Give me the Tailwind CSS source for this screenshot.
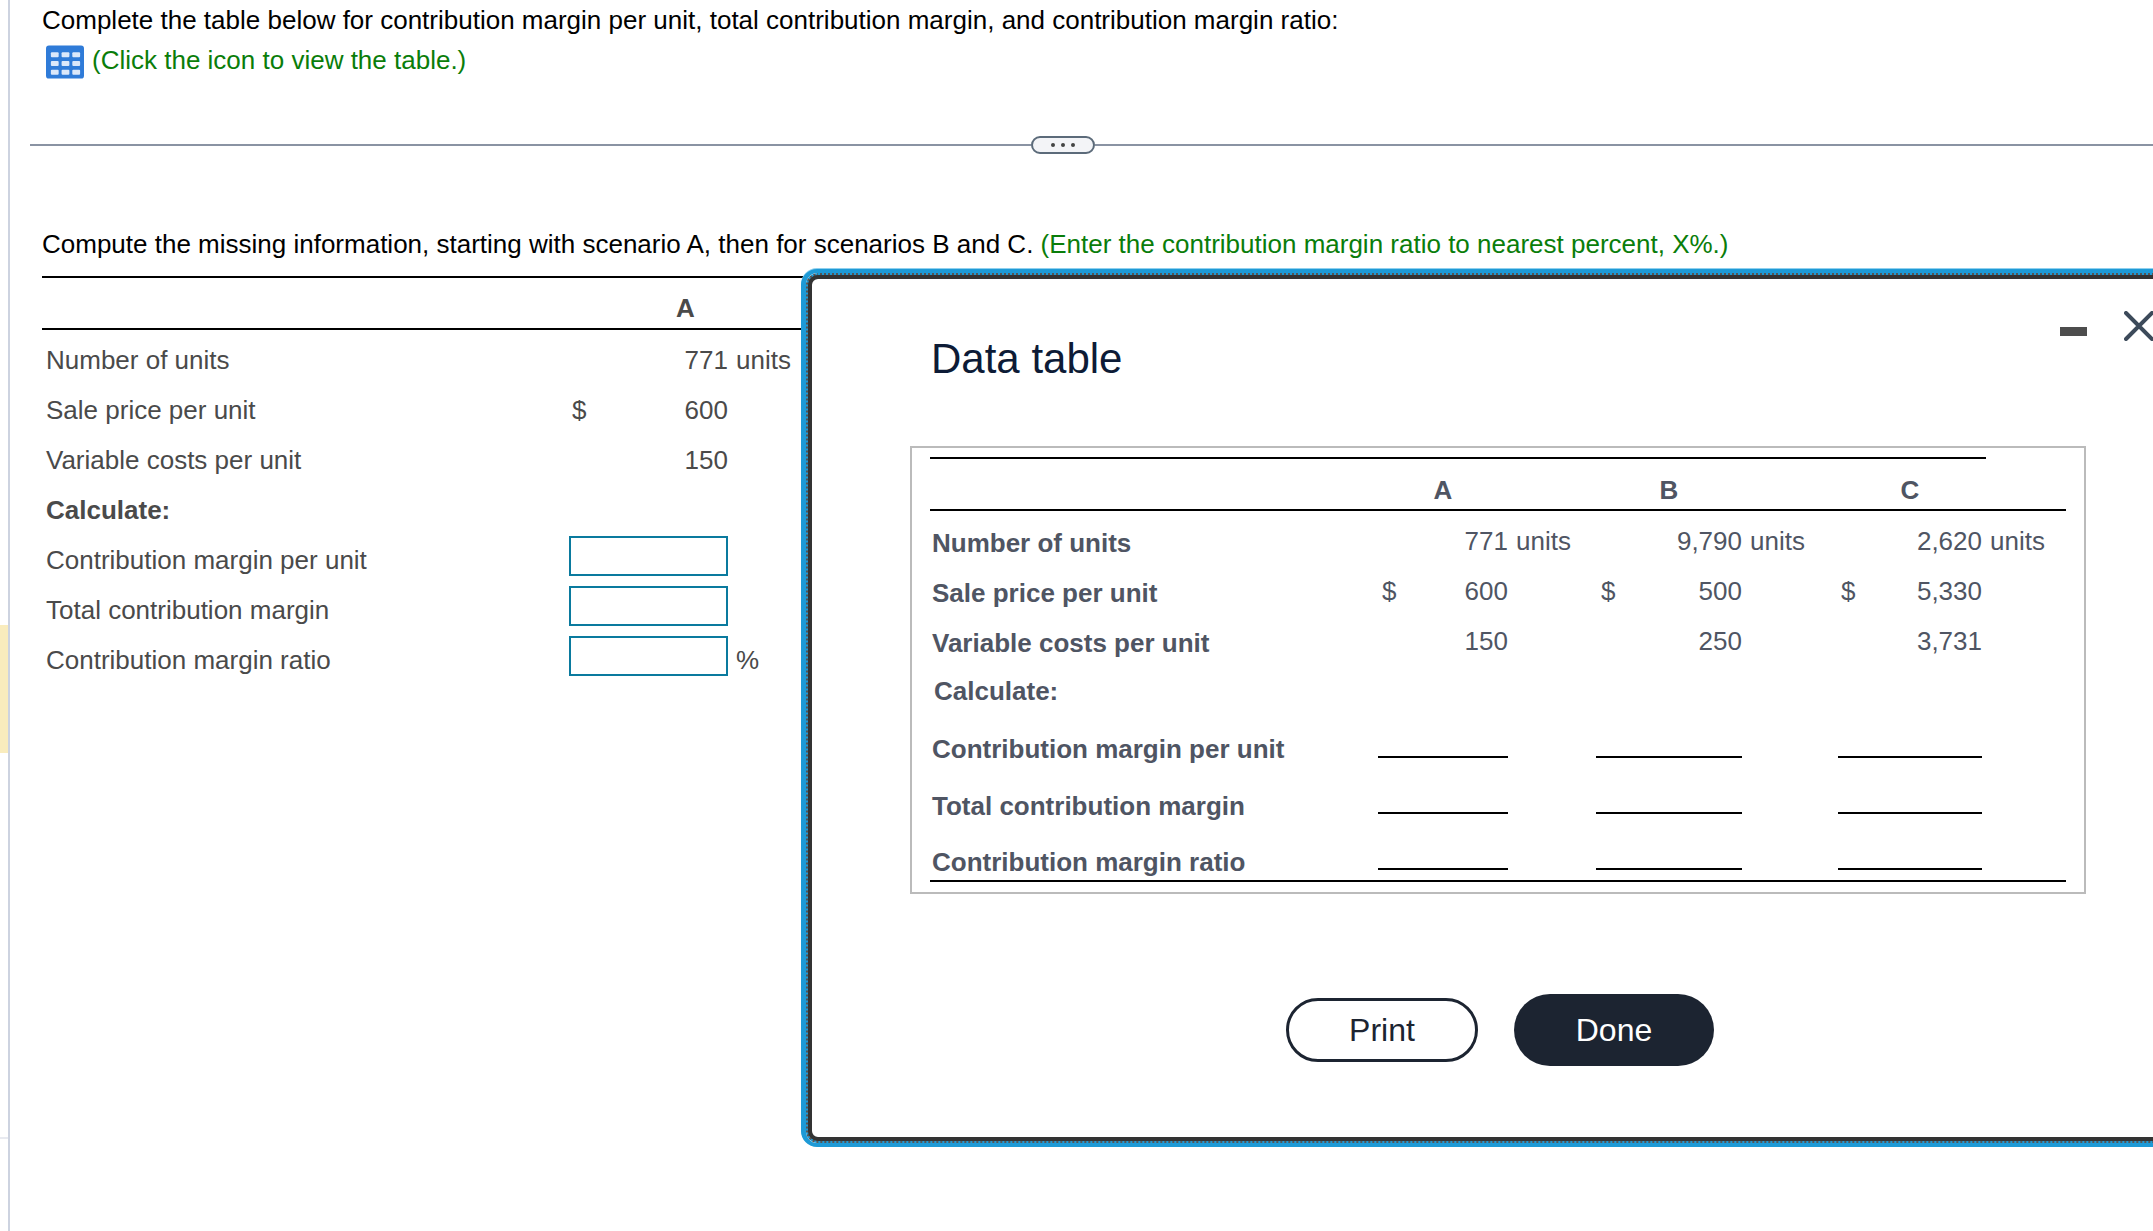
<!DOCTYPE html>
<html lang="en">
<head>
  <meta charset="UTF-8" />
  <title>Contribution margin</title>
  <script src="https://cdn.jsdelivr.net/npm/@tailwindcss/browser@4"></script>
</head>
<body class="bg-white h-[1231px] overflow-hidden relative font-['Liberation_Sans',sans-serif] text-[26px]">
  <!-- left rail -->
  <div class="absolute left-[8px] top-0 w-[2px] h-full bg-[#cdd3e0]"></div>
  <div class="absolute left-0 top-[625px] w-[8px] h-[128px] bg-[#f9ecbd]"></div>
  <div class="absolute left-0 top-[1137px] w-[8px] h-[2px] bg-[#e8eaf0]"></div>

  <div class="pl-[42px]">
    <p class="h-[40px] leading-[40px] text-black">Complete the table below for contribution margin per unit, total contribution margin, and contribution margin ratio:</p>
    <p class="h-[40px] flex items-center text-[#0a7d0a] ml-[4px]">
      <svg class="w-[38px] h-[34px] mr-[8px] mt-[4px]" viewBox="0 0 39 34">
        <rect width="39" height="34" rx="3" fill="#2f7bd8"/>
        <g fill="#dbe8fa">
          <rect x="5" y="7" width="8" height="5" rx="1"/><rect x="16" y="7" width="8" height="5" rx="1"/><rect x="27" y="7" width="8" height="5" rx="1"/>
          <rect x="5" y="16" width="8" height="5" rx="1"/><rect x="16" y="16" width="8" height="5" rx="1"/><rect x="27" y="16" width="8" height="5" rx="1"/>
          <rect x="5" y="25" width="8" height="5" rx="1"/><rect x="16" y="25" width="8" height="5" rx="1"/><rect x="27" y="25" width="8" height="5" rx="1"/>
        </g>
      </svg>
      (Click the icon to view the table.)
    </p>
  </div>

  <!-- divider -->
  <div class="ml-[30px] mt-[56px] h-[18px] flex items-center">
    <div class="flex-1 h-[2px] bg-[#8a93a3]"></div>
    <div class="w-[64px] h-[18px] rounded-full border-2 border-[#5c6b7a] bg-[#f3f4f7] flex items-center justify-center gap-[6px]">
      <span class="w-[4px] h-[4px] rounded-full bg-[#444]"></span>
      <span class="w-[4px] h-[4px] rounded-full bg-[#444]"></span>
      <span class="w-[4px] h-[4px] rounded-full bg-[#444]"></span>
    </div>
    <div class="w-[1058px] h-[2px] bg-[#8a93a3]"></div>
  </div>

  <div class="pl-[42px]">
    <p class="mt-[70px] h-[40px] leading-[40px] text-black">Compute the missing information, starting with scenario A, then for scenarios B and C. <span class="text-[#0a7d0a]">(Enter the contribution margin ratio to nearest percent, X%.)</span></p>

    <!-- question table, runs under the dialog -->
    <div class="mt-[14px] w-[770px] text-[#4a4a4a]">
      <div class="h-[40px] border-y-2 border-black flex items-center pt-[10px] box-content -mt-[2px]">
        <span class="ml-[634px] font-bold">A</span>
      </div>
      <div class="pl-[4px]">
        <div class="flex items-center h-[50px] mt-[5px]">
          <span class="w-[523px]">Number of units</span>
          <span class="w-[159px] flex justify-end">771</span>
          <span class="ml-[8px]">units</span>
        </div>
        <div class="flex items-center h-[50px]">
          <span class="w-[523px]">Sale price per unit</span>
          <span class="w-[159px] flex justify-between"><span class="ml-[3px]">$</span><span>600</span></span>
        </div>
        <div class="flex items-center h-[50px]">
          <span class="w-[523px]">Variable costs per unit</span>
          <span class="w-[159px] flex justify-end">150</span>
        </div>
        <div class="flex items-center h-[50px] font-bold">Calculate:</div>
        <div class="flex items-center h-[50px]">
          <span class="w-[523px]">Contribution margin per unit</span>
          <span class="w-[159px] h-[40px] border-2 border-[#0a7a9e] mb-[8px]"></span>
        </div>
        <div class="flex items-center h-[50px]">
          <span class="w-[523px]">Total contribution margin</span>
          <span class="w-[159px] h-[40px] border-2 border-[#0a7a9e] mb-[8px]"></span>
        </div>
        <div class="flex items-center h-[50px]">
          <span class="w-[523px]">Contribution margin ratio</span>
          <span class="w-[159px] h-[40px] border-2 border-[#0a7a9e] mb-[8px]"></span>
          <span class="ml-[8px]">%</span>
        </div>
      </div>
    </div>
  </div>

  <!-- dialog -->
  <div class="absolute left-[801px] top-[269px] w-[1400px] h-[878px] rounded-[16px] border-[4px] border-l-[5px] border-[#1e9ad6] shadow-[0_-1px_0_#8fd0ee] bg-white">
    <div class="h-full rounded-[12px] border-2 border-dotted border-[#1e9ad6] bg-[#555]">
      <div class="h-full rounded-[10px] border-[4px] border-[#333] bg-white relative">
        <h2 class="absolute left-[119px] top-[55px] text-[42px] leading-[50px] text-[#0d1b36]">Data table</h2>
        <div class="absolute left-[1248px] top-[48px] w-[27px] h-[9px] bg-[#4d4d4d]"></div>
        <svg class="absolute left-[1312px] top-[32px] w-[30px] h-[30px]" viewBox="0 0 30 30" fill="none" stroke="#3c4a5a" stroke-width="4" stroke-linecap="round">
          <path d="M2 2 L28 28 M28 2 L2 28"/>
        </svg>

        <div class="absolute left-[98px] top-[167px] w-[1176px] h-[448px] border-2 border-[#bbb] pl-[18px] pt-[9px] text-[#4f5563]">
          <div class="w-[1056px] h-[2px] bg-black"></div>
          <div class="w-[1136px] h-[52px] border-b-2 border-black flex items-end leading-[37px] font-bold">
            <span class="w-[448px]"></span>
            <span class="w-[130px] text-center">A</span>
            <span class="w-[88px]"></span>
            <span class="w-[146px] text-center">B</span>
            <span class="w-[96px]"></span>
            <span class="w-[144px] text-center">C</span>
          </div>
          <div class="w-[1136px] mt-[5px]">
            <div class="flex h-[50px] items-center">
              <span class="w-[448px] pl-[2px] pt-[4px] font-bold">Number of units</span>
              <span class="w-[130px] text-right">771</span><span class="ml-[8px] w-[80px]">units</span>
              <span class="w-[146px] text-right">9,790</span><span class="ml-[8px] w-[88px]">units</span>
              <span class="w-[144px] text-right">2,620</span><span class="ml-[8px]">units</span>
            </div>
            <div class="flex h-[50px] items-center">
              <span class="w-[448px] pl-[2px] pt-[4px] font-bold">Sale price per unit</span>
              <span class="w-[130px] flex justify-between"><span class="ml-[4px]">$</span><span>600</span></span><span class="w-[88px]"></span>
              <span class="w-[146px] flex justify-between"><span class="ml-[5px]">$</span><span>500</span></span><span class="w-[96px]"></span>
              <span class="w-[144px] flex justify-between"><span class="ml-[3px]">$</span><span>5,330</span></span>
            </div>
            <div class="flex h-[50px] items-center">
              <span class="w-[448px] pl-[2px] pt-[4px] font-bold">Variable costs per unit</span>
              <span class="w-[130px] text-right">150</span><span class="w-[88px]"></span>
              <span class="w-[146px] text-right">250</span><span class="w-[96px]"></span>
              <span class="w-[144px] text-right">3,731</span>
            </div>
            <div class="flex h-[50px] items-center pl-[4px] font-bold">Calculate:</div>
            <div class="flex h-[56px] items-start mt-[6px]">
              <span class="w-[448px] pl-[2px] leading-[54px] font-bold">Contribution margin per unit</span>
              <span class="w-[130px] h-[36px] border-b-2 border-black"></span><span class="w-[88px]"></span>
              <span class="w-[146px] h-[36px] border-b-2 border-black"></span><span class="w-[96px]"></span>
              <span class="w-[144px] h-[36px] border-b-2 border-black"></span>
            </div>
            <div class="flex h-[56px] items-start">
              <span class="w-[448px] pl-[2px] leading-[56px] font-bold">Total contribution margin</span>
              <span class="w-[130px] h-[36px] border-b-2 border-black"></span><span class="w-[88px]"></span>
              <span class="w-[146px] h-[36px] border-b-2 border-black"></span><span class="w-[96px]"></span>
              <span class="w-[144px] h-[36px] border-b-2 border-black"></span>
            </div>
            <div class="flex h-[48px] items-start border-b-2 border-black">
              <span class="w-[448px] pl-[2px] leading-[56px] font-bold">Contribution margin ratio</span>
              <span class="w-[130px] h-[36px] border-b-2 border-black"></span><span class="w-[88px]"></span>
              <span class="w-[146px] h-[36px] border-b-2 border-black"></span><span class="w-[96px]"></span>
              <span class="w-[144px] h-[36px] border-b-2 border-black"></span>
            </div>
          </div>
        </div>

        <div class="absolute left-[474px] top-[715px] flex items-center gap-[36px] text-[32px]">
          <button class="w-[192px] h-[64px] rounded-full border-[3px] border-[#1c2431] text-[#1c2431]">Print</button>
          <button class="w-[200px] h-[72px] rounded-full bg-[#1c2431] text-white">Done</button>
        </div>
      </div>
    </div>
  </div>
</body>
</html>
